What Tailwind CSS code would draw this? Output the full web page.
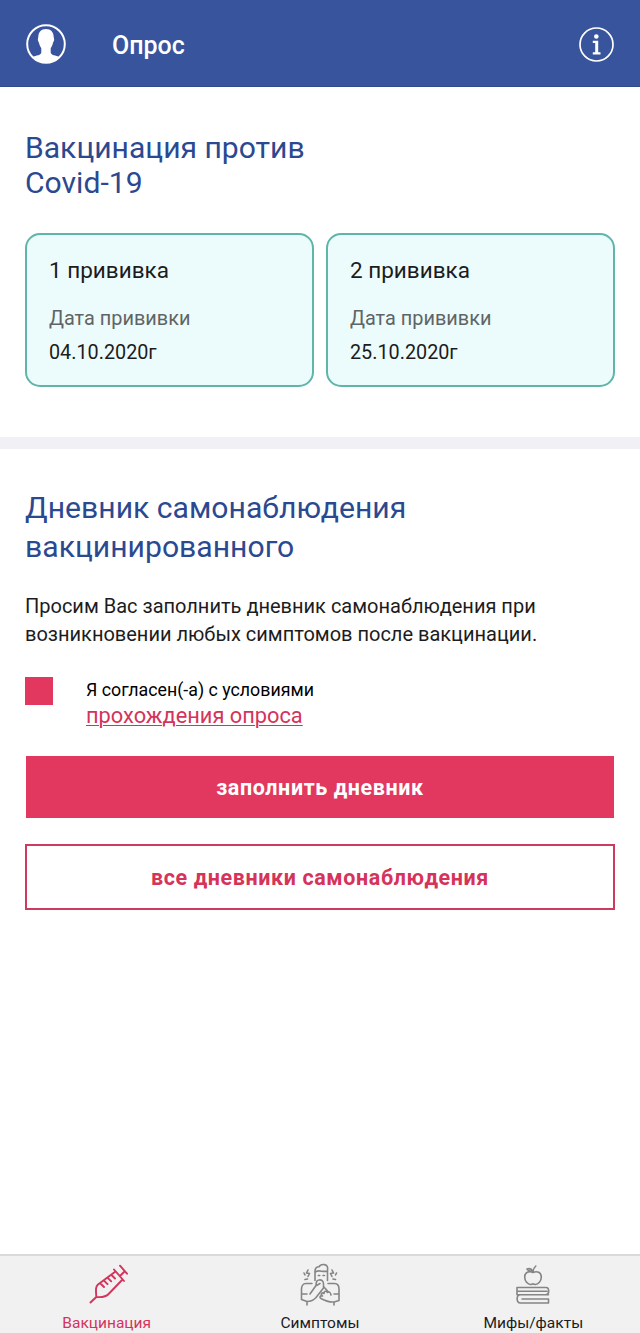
<!DOCTYPE html>
<html lang="ru">
<head>
    <meta charset="UTF-8">
    <meta name="viewport" content="width=device-width, initial-scale=1.0">
    <title>Опрос</title>
    <script src="https://cdn.jsdelivr.net/npm/@tailwindcss/browser@4"></script>
</head>
<body class="bg-white h-[1333px] overflow-hidden flex flex-col font-[Roboto,sans-serif] text-[#1c1c1e]">
    <!-- Header -->
    <header class="h-[87px] shrink-0 bg-[#38549c] border-b border-[#314a8c] flex items-center pt-px px-[26px] text-white">
        <svg class="w-10 h-10" viewBox="0 0 40 40" fill="none">
            <circle cx="20" cy="20" r="18.8" stroke="currentColor" stroke-width="2"/>
            <path d="M20 5c5 0 7.700 3.300 7.700 8 0 1 .6 1.400.4 3-.2 1.500-.9 1.900-1.200 3.200-.5 2.200-1.300 3.700-2.200 4.800v4.500c0 2.500 5 3 9 4.500A18.800 18.800 0 0 1 6.300 33c4-1.500 9-2 9-4.500V24c-.9-1.100-1.700-2.600-2.200-4.800-.3-1.300-1-1.700-1.200-3.200-.2-1.600.4-2 .4-3 0-4.700 2.700-8 7.700-8z" fill="currentColor"/>
        </svg>
        <h1 class="ml-[46px] mt-1 flex-1 text-[25px] font-medium leading-8">Опрос</h1>
        <svg class="w-[35px] h-[35px] mt-px" viewBox="0 0 35 35" fill="none">
            <circle cx="17.500" cy="17.500" r="16.500" stroke="currentColor" stroke-width="1.700"/>
            <circle cx="17.300" cy="9.500" r="2.300" fill="currentColor"/>
            <path d="M13.800 13.800h5.400v11.500h2.300v2.100h-7.700v-2.100h2.400v-9.400h-2.400z" fill="currentColor"/>
        </svg>
    </header>

    <main class="flex-1">
        <!-- Vaccination dates -->
        <section class="h-[350px] px-[25px] pt-[43px]">
            <h2 class="text-[30.1px] leading-[35px] text-[#2b4990]">Вакцинация против<br>Covid-19</h2>
            <div class="mt-[33px] grid grid-cols-2 gap-3">
                <div class="h-[154px] rounded-[15px] border-2 border-[#5fb5a8] bg-[#ecfbfb] pl-[22px] pt-[21px]">
                    <h3 class="text-[22.5px] leading-7">1 прививка</h3>
                    <p class="mt-[21px] text-[19.9px] leading-7 text-[#5f6566]">Дата прививки</p>
                    <p class="mt-1.5 text-[19.8px] leading-7">04.10.2020г</p>
                </div>
                <div class="h-[154px] rounded-[15px] border-2 border-[#5fb5a8] bg-[#ecfbfb] pl-[22px] pt-[21px]">
                    <h3 class="text-[22.5px] leading-7">2 прививка</h3>
                    <p class="mt-[21px] text-[19.9px] leading-7 text-[#5f6566]">Дата прививки</p>
                    <p class="mt-1.5 text-[19.8px] leading-7">25.10.2020г</p>
                </div>
            </div>
        </section>

        <div class="h-3 bg-[#f1f0f5]"></div>

        <!-- Diary -->
        <section class="px-[25px] pt-[39px]">
            <h2 class="text-[30.15px] leading-[39px] text-[#2b4990]">Дневник самонаблюдения<br>вакцинированного</h2>
            <p class="mt-[26px] text-[20px] leading-[28px]">Просим Вас заполнить дневник самонаблюдения при<br>возникновении любых симптомов после вакцинации.</p>

            <div class="mt-[29px] flex h-[79px]">
                <span class="w-7 h-7 bg-[#e2385f]"></span>
                <div class="ml-[33px]">
                    <p class="text-[17.8px] leading-[26px] text-black">Я согласен(-а) с условиями</p>
                    <a class="block text-[21.8px] leading-[26px] text-[#d3345c] underline decoration-1 underline-offset-2" href="#">прохождения опроса</a>
                </div>
            </div>

            <button class="block mx-px w-[588px] h-[62px] pt-0.5 bg-[#e2385f] text-white text-[21.5px] font-bold tracking-[0.6px]">заполнить дневник</button>
            <button class="block mt-[26px] w-full h-[66px] pt-0.5 border-2 border-[#cc3a60] text-[#d6335a] text-[21.5px] font-bold tracking-[0.6px]">все дневники самонаблюдения</button>
        </section>
    </main>

    <!-- Bottom navigation -->
    <nav class="h-[79px] shrink-0 bg-[#f1f1f1] border-t-2 border-[#d9d9d9] grid grid-cols-3 text-[15.5px]">
        <a class="flex flex-col items-center pt-[7px] text-[#d3345c]" href="#">
            <svg class="w-11 h-11" viewBox="0 0 44 44" fill="none" stroke="currentColor" stroke-width="1.900" stroke-linecap="round" stroke-linejoin="round">
                <path d="M5.500 39.500l5.800-5.500M30.500 8.500L13 21.500c-2.500 2-2.200 5-1.700 12.500 6 .5 9.500.2 12.300-3L37.500 16.500M29 6.500l10 11.500M35 13l4-4M35 2.700l7 8M15.500 20.500l3.500 3.500M19 17.700l3.500 3.500M22.700 14.800l3.500 3.500M26.500 12l3.500 3.500"/>
            </svg>
            <span class="mt-[6px] leading-5">Вакцинация</span>
        </a>
        <a class="flex flex-col items-center pt-[7px]" href="#">
            <svg class="w-11 h-11 text-[#858585]" viewBox="0 0 44 44" fill="none" stroke="currentColor" stroke-width="1.600" stroke-linecap="round" stroke-linejoin="round">
                <!-- head -->
                <path d="M17 17.500V8.500c0-3.200 1.500-4.700 4-4.700C22 1.800 24 1.300 26.500 1.600c2.700.4 3.500 2.400 3 5.400V17.500M17 9.500c1.500-1.500 3-2 5-1.500 2 .8 5 0 7.500.5M20.300 12.500h1.500M25 12.500h1.500"/>
                <!-- arms and hands -->
                <path d="M14 20.500H8c-3 0-4.500 2.500-4.500 5.500v10.500L9 38.500V42M3.500 31H9M12 31l6-8.500c0-3 .5-5.500 3-5.500 2.500-.5 4.500 1 4.500 4v4L18 34.500c-2.500 3-5 4-9 4M18.500 22.500l3.500-2M30 20.500h6.500c3 0 4.500 2.500 4.500 5.500v11.500L36 39v3M41 31h-5M36 39c-5 .5-8.500-1-13-3.500-2-1.300-1-3 1.500-2.500-2.500-2-.5-4 1.500-2.500 0-2.500 2-3 3.500-1 1.500-1.500 3 0 3.500 2.500M29.500 28l-4-4.500"/>
                <!-- pain marks -->
                <path d="M10 7l-1.500 3 3 .5-1.500 3M6 10l1 2M7 16.500l2.500-.5M34 7l1.500 3-3 .5 1.500 3M38.500 10l-1 2M37.500 16.500L35 16"/>
            </svg>
            <span class="mt-[6px] leading-5">Симптомы</span>
        </a>
        <a class="flex flex-col items-center pt-[7px]" href="#">
            <svg class="w-11 h-11 text-[#858585]" viewBox="0 0 44 44" fill="none" stroke="currentColor" stroke-width="1.600" stroke-linecap="round" stroke-linejoin="round">
                <path d="M22 9.500c-4.200-2-8.300 0-8.300 4.500 0 4.200 3 7.500 6 7.500 1 0 1.300-.6 2.300-.6s1.300.6 2.300.6c3 0 6-3.300 6-7.500 0-4.500-4.100-6.500-8.300-4.500zM22 9.500c0-3 1-5 2.800-6.500M21.500 7.500c-1.500-2-4-2-5.500-1.500 1 1.800 3.500 2.500 5.500 1.500"/>
                <path d="M35 24.500H6v3.700h30M35 24.500c3.600 0 3.600 7.200 0 7.200M37.500 31.700H9.500c-4.500 0-4.500 8.300 0 8.300h28M37.500 36H11M6 28.200v3.500h3.500M37.500 36v4"/>
            </svg>
            <span class="mt-[6px] leading-5">Мифы/факты</span>
        </a>
    </nav>
</body>
</html>
